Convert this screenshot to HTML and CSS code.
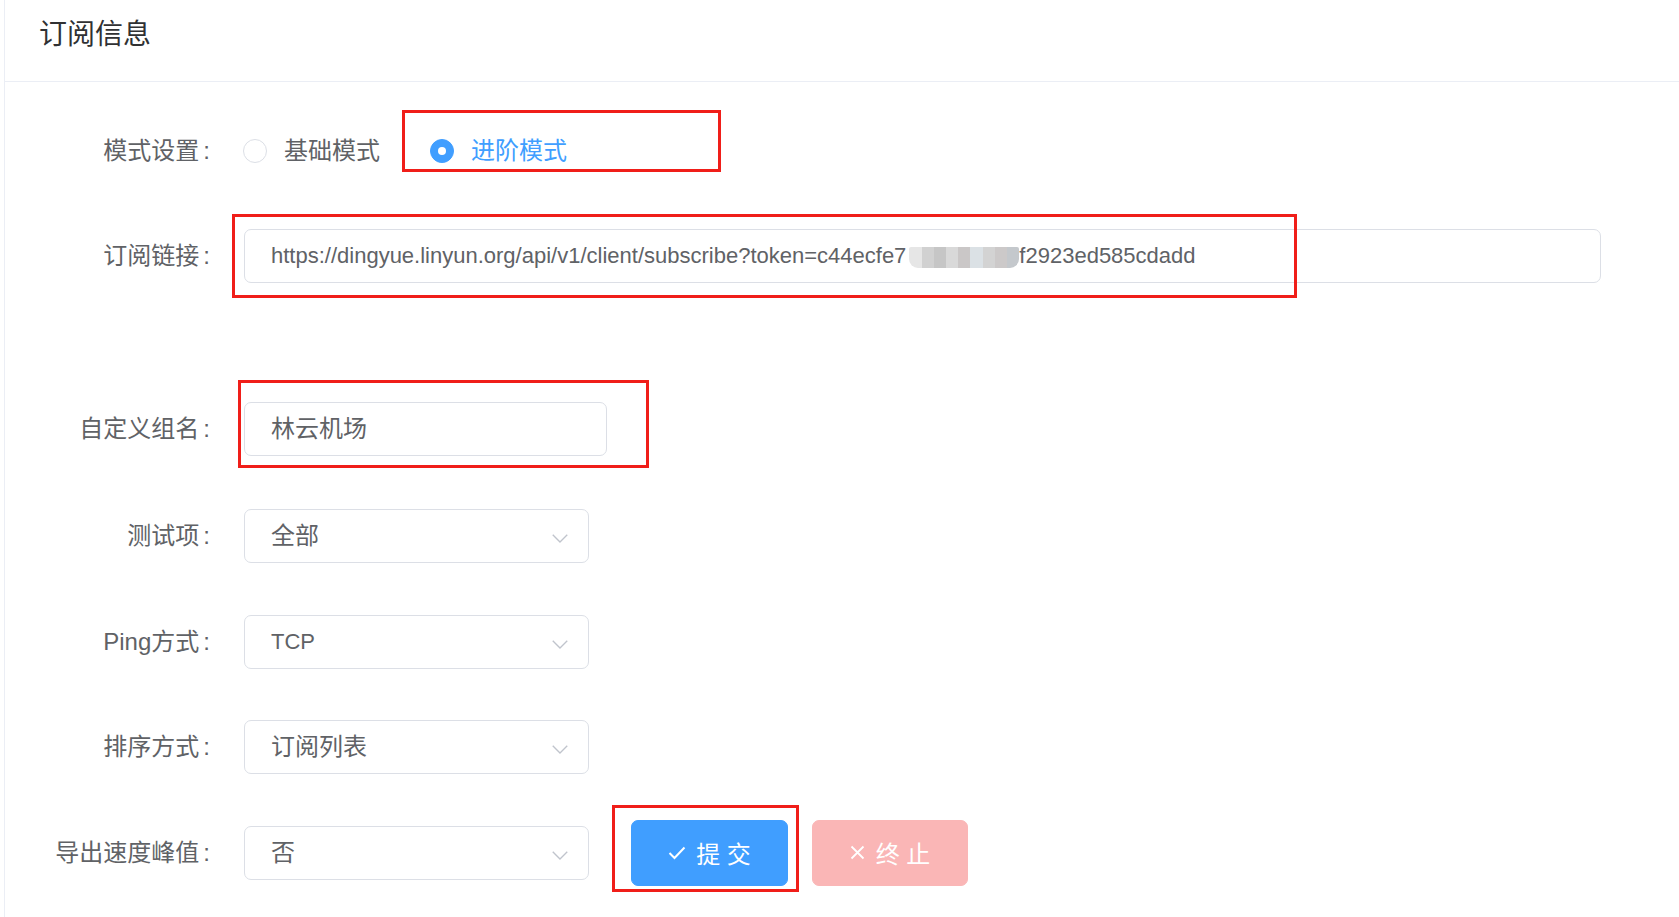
FILE: index.html
```html
<!DOCTYPE html>
<html lang="zh-CN">
<head>
<meta charset="utf-8">
<title>订阅信息</title>
<link rel="stylesheet" href="styles.css">
</head>
<body>
<div class="card">
  <div class="card-header">订阅信息</div>
  <form class="form">
    <div class="row row-mode">
      <label class="label">模式设置</label>
      <div class="control radios">
        <span class="radio"><span class="radio-dot"></span><span class="radio-text">基础模式</span></span>
        <span class="radio checked"><span class="radio-dot"></span><span class="radio-text">进阶模式</span><span class="mark mark-mode"></span></span>
      </div>
    </div>

    <div class="row row-url">
      <label class="label">订阅链接</label>
      <div class="control">
        <div class="input input-full">
          <span class="latin">https://dingyue.linyun.org/api/v1/client/subscribe?token=c44ecfe7</span><span class="mosaic"><i></i><i></i><i></i><i></i><i></i><i></i><i></i><i></i><i></i></span><span class="latin">f2923ed585cdadd</span>
          <span class="mark mark-url"></span>
        </div>
      </div>
    </div>

    <div class="row row-group">
      <label class="label">自定义组名</label>
      <div class="control">
        <div class="input input-group">林云机场<span class="mark mark-group"></span></div>
      </div>
    </div>

    <div class="row row-test">
      <label class="label">测试项</label>
      <div class="control">
        <div class="input select"><span>全部</span>
          <svg class="arrow" width="16" height="9" viewBox="0 0 16 9"><polyline points="0.75,0.75 8,8 15.25,0.75" fill="none" stroke="#c0c4cc" stroke-width="1.4"/></svg>
        </div>
      </div>
    </div>

    <div class="row row-ping">
      <label class="label">Ping方式</label>
      <div class="control">
        <div class="input select"><span class="latin">TCP</span>
          <svg class="arrow" width="16" height="9" viewBox="0 0 16 9"><polyline points="0.75,0.75 8,8 15.25,0.75" fill="none" stroke="#c0c4cc" stroke-width="1.4"/></svg>
        </div>
      </div>
    </div>

    <div class="row row-sort">
      <label class="label">排序方式</label>
      <div class="control">
        <div class="input select"><span>订阅列表</span>
          <svg class="arrow" width="16" height="9" viewBox="0 0 16 9"><polyline points="0.75,0.75 8,8 15.25,0.75" fill="none" stroke="#c0c4cc" stroke-width="1.4"/></svg>
        </div>
      </div>
    </div>

    <div class="row row-last">
      <label class="label">导出速度峰值</label>
      <div class="control actions">
        <div class="input select"><span>否</span>
          <svg class="arrow" width="16" height="9" viewBox="0 0 16 9"><polyline points="0.75,0.75 8,8 15.25,0.75" fill="none" stroke="#c0c4cc" stroke-width="1.4"/></svg>
        </div>
        <button type="button" class="btn btn-primary">
          <svg width="18" height="14" viewBox="0 0 18 14"><polyline points="1.5,7 6.5,12 16.5,1.5" fill="none" stroke="#fff" stroke-width="2"/></svg>
          <span>提 交</span>
          <span class="mark mark-btn"></span>
        </button>
        <button type="button" class="btn btn-danger" disabled>
          <svg width="15" height="15" viewBox="0 0 15 15"><path d="M1.5 1.5L13.5 13.5M13.5 1.5L1.5 13.5" fill="none" stroke="#fff" stroke-width="1.8"/></svg>
          <span>终 止</span>
        </button>
      </div>
    </div>
  </form>
</div>
</body>
</html>
```

FILE: styles.css
```css
html, body {
  margin: 0;
  padding: 0;
  background: #ffffff;
}

body {
  font-family: "Liberation Sans", "Noto Sans CJK SC", sans-serif;
  color: #606266;
  overflow: hidden;
  height: 917px;
}

.card {
  margin-left: 4px;
  border-left: 1px solid #ebeef5;
  min-height: 917px;
  background: #fff;
}

.card-header {
  box-sizing: border-box;
  height: 82px;
  padding: 19px 34px 0;
  border-bottom: 1px solid #ebeef5;
  font-size: 28px;
  line-height: 32px;
  color: #303133;
}

.form {
  padding: 42px 78px 0 0;
}

.row {
  display: grid;
  grid-template-columns: 205px 1fr;
  column-gap: 34px;
  align-items: center;
  margin-bottom: 52.5px;
}

.row-mode {
  margin-bottom: 51px;
}

.row-url {
  margin-bottom: 119px;
}

.row-ping {
  margin-bottom: 50.5px;
}

.row-sort {
  margin-bottom: 46px;
}

.label {
  text-align: right;
  font-size: 24px;
  line-height: 54px;
  color: #606266;
  white-space: nowrap;
}

.label::after {
  content: ":";
  margin-left: 4px;
}

.control {
  display: flex;
  align-items: center;
  min-height: 54px;
}

.latin {
  font-size: 22px;
}

/* radios */
.radios {
  margin-left: -1px;
}

.radio {
  position: relative;
  display: inline-flex;
  align-items: center;
  height: 54px;
  line-height: 54px;
  margin-right: 50px;
  font-size: 24px;
  color: #606266;
}

.radio-dot {
  box-sizing: border-box;
  width: 24px;
  height: 24px;
  border: 1px solid #dcdfe6;
  border-radius: 50%;
  margin-right: 17px;
  display: flex;
  align-items: center;
  justify-content: center;
  background: #fff;
}

.radio.checked .radio-dot {
  background: #409eff;
  border-color: #409eff;
}

.radio.checked .radio-dot::after {
  content: "";
  width: 8px;
  height: 8px;
  border-radius: 50%;
  background: #fff;
}

.radio.checked .radio-text {
  color: #409eff;
}

/* inputs */
.input {
  position: relative;
  box-sizing: border-box;
  height: 54px;
  border: 1px solid #dcdfe6;
  border-radius: 7px;
  padding: 0 26px;
  display: flex;
  align-items: center;
  font-size: 24px;
  line-height: 52px;
  color: #606266;
  background: #fff;
  white-space: nowrap;
}

.input-full {
  flex: 1;
}

.input-group {
  width: 363px;
}

.select {
  width: 345px;
  justify-content: space-between;
  padding-right: 20px;
}

.arrow {
  display: block;
  margin-top: 5px;
}

/* blurred token part */
.mosaic {
  display: inline-flex;
  width: 110px;
  height: 21px;
  margin: 2px 0 0 3px;
  border-radius: 2px 2px 9px 9px;
  overflow: hidden;
}

.mosaic i {
  flex: 1;
  height: 100%;
}

.mosaic i:nth-child(1) { background: #e6e6e6; }
.mosaic i:nth-child(2) { background: #d1d1d1; }
.mosaic i:nth-child(3) { background: #c6c6c6; }
.mosaic i:nth-child(4) { background: #d9d9d9; }
.mosaic i:nth-child(5) { background: #cac7c7; }
.mosaic i:nth-child(6) { background: #dbe1e5; }
.mosaic i:nth-child(7) { background: #d3d3d3; }
.mosaic i:nth-child(8) { background: #ccc9c9; }
.mosaic i:nth-child(9) { background: #c4c8cc; }

/* buttons */
.btn {
  position: relative;
  box-sizing: border-box;
  height: 66px;
  width: 157px;
  border-radius: 7px;
  border: 1px solid transparent;
  display: inline-flex;
  align-items: center;
  justify-content: center;
  gap: 10px;
  font-family: "Liberation Sans", "Noto Sans CJK SC", sans-serif;
  font-size: 24px;
  color: #fff;
  padding: 0;
}

.btn-primary {
  margin-left: 42px;
  background: #409eff;
  border-color: #409eff;
}

.btn-danger {
  margin-left: 24px;
  width: 156px;
  background: #fab6b6;
  border-color: #fab6b6;
  gap: 11px;
}

/* annotation boxes */
.mark {
  position: absolute;
  box-sizing: border-box;
  border: 3px solid #f01e19;
  pointer-events: none;
}

.mark-mode {
  left: -28px;
  top: -14px;
  width: 319px;
  height: 62px;
}

.mark-url {
  left: -13px;
  top: -16px;
  width: 1065px;
  height: 84px;
}

.mark-group {
  left: -7px;
  top: -23px;
  width: 411px;
  height: 88px;
}

.mark-btn {
  left: -20px;
  top: -16px;
  width: 187px;
  height: 87px;
}
```
